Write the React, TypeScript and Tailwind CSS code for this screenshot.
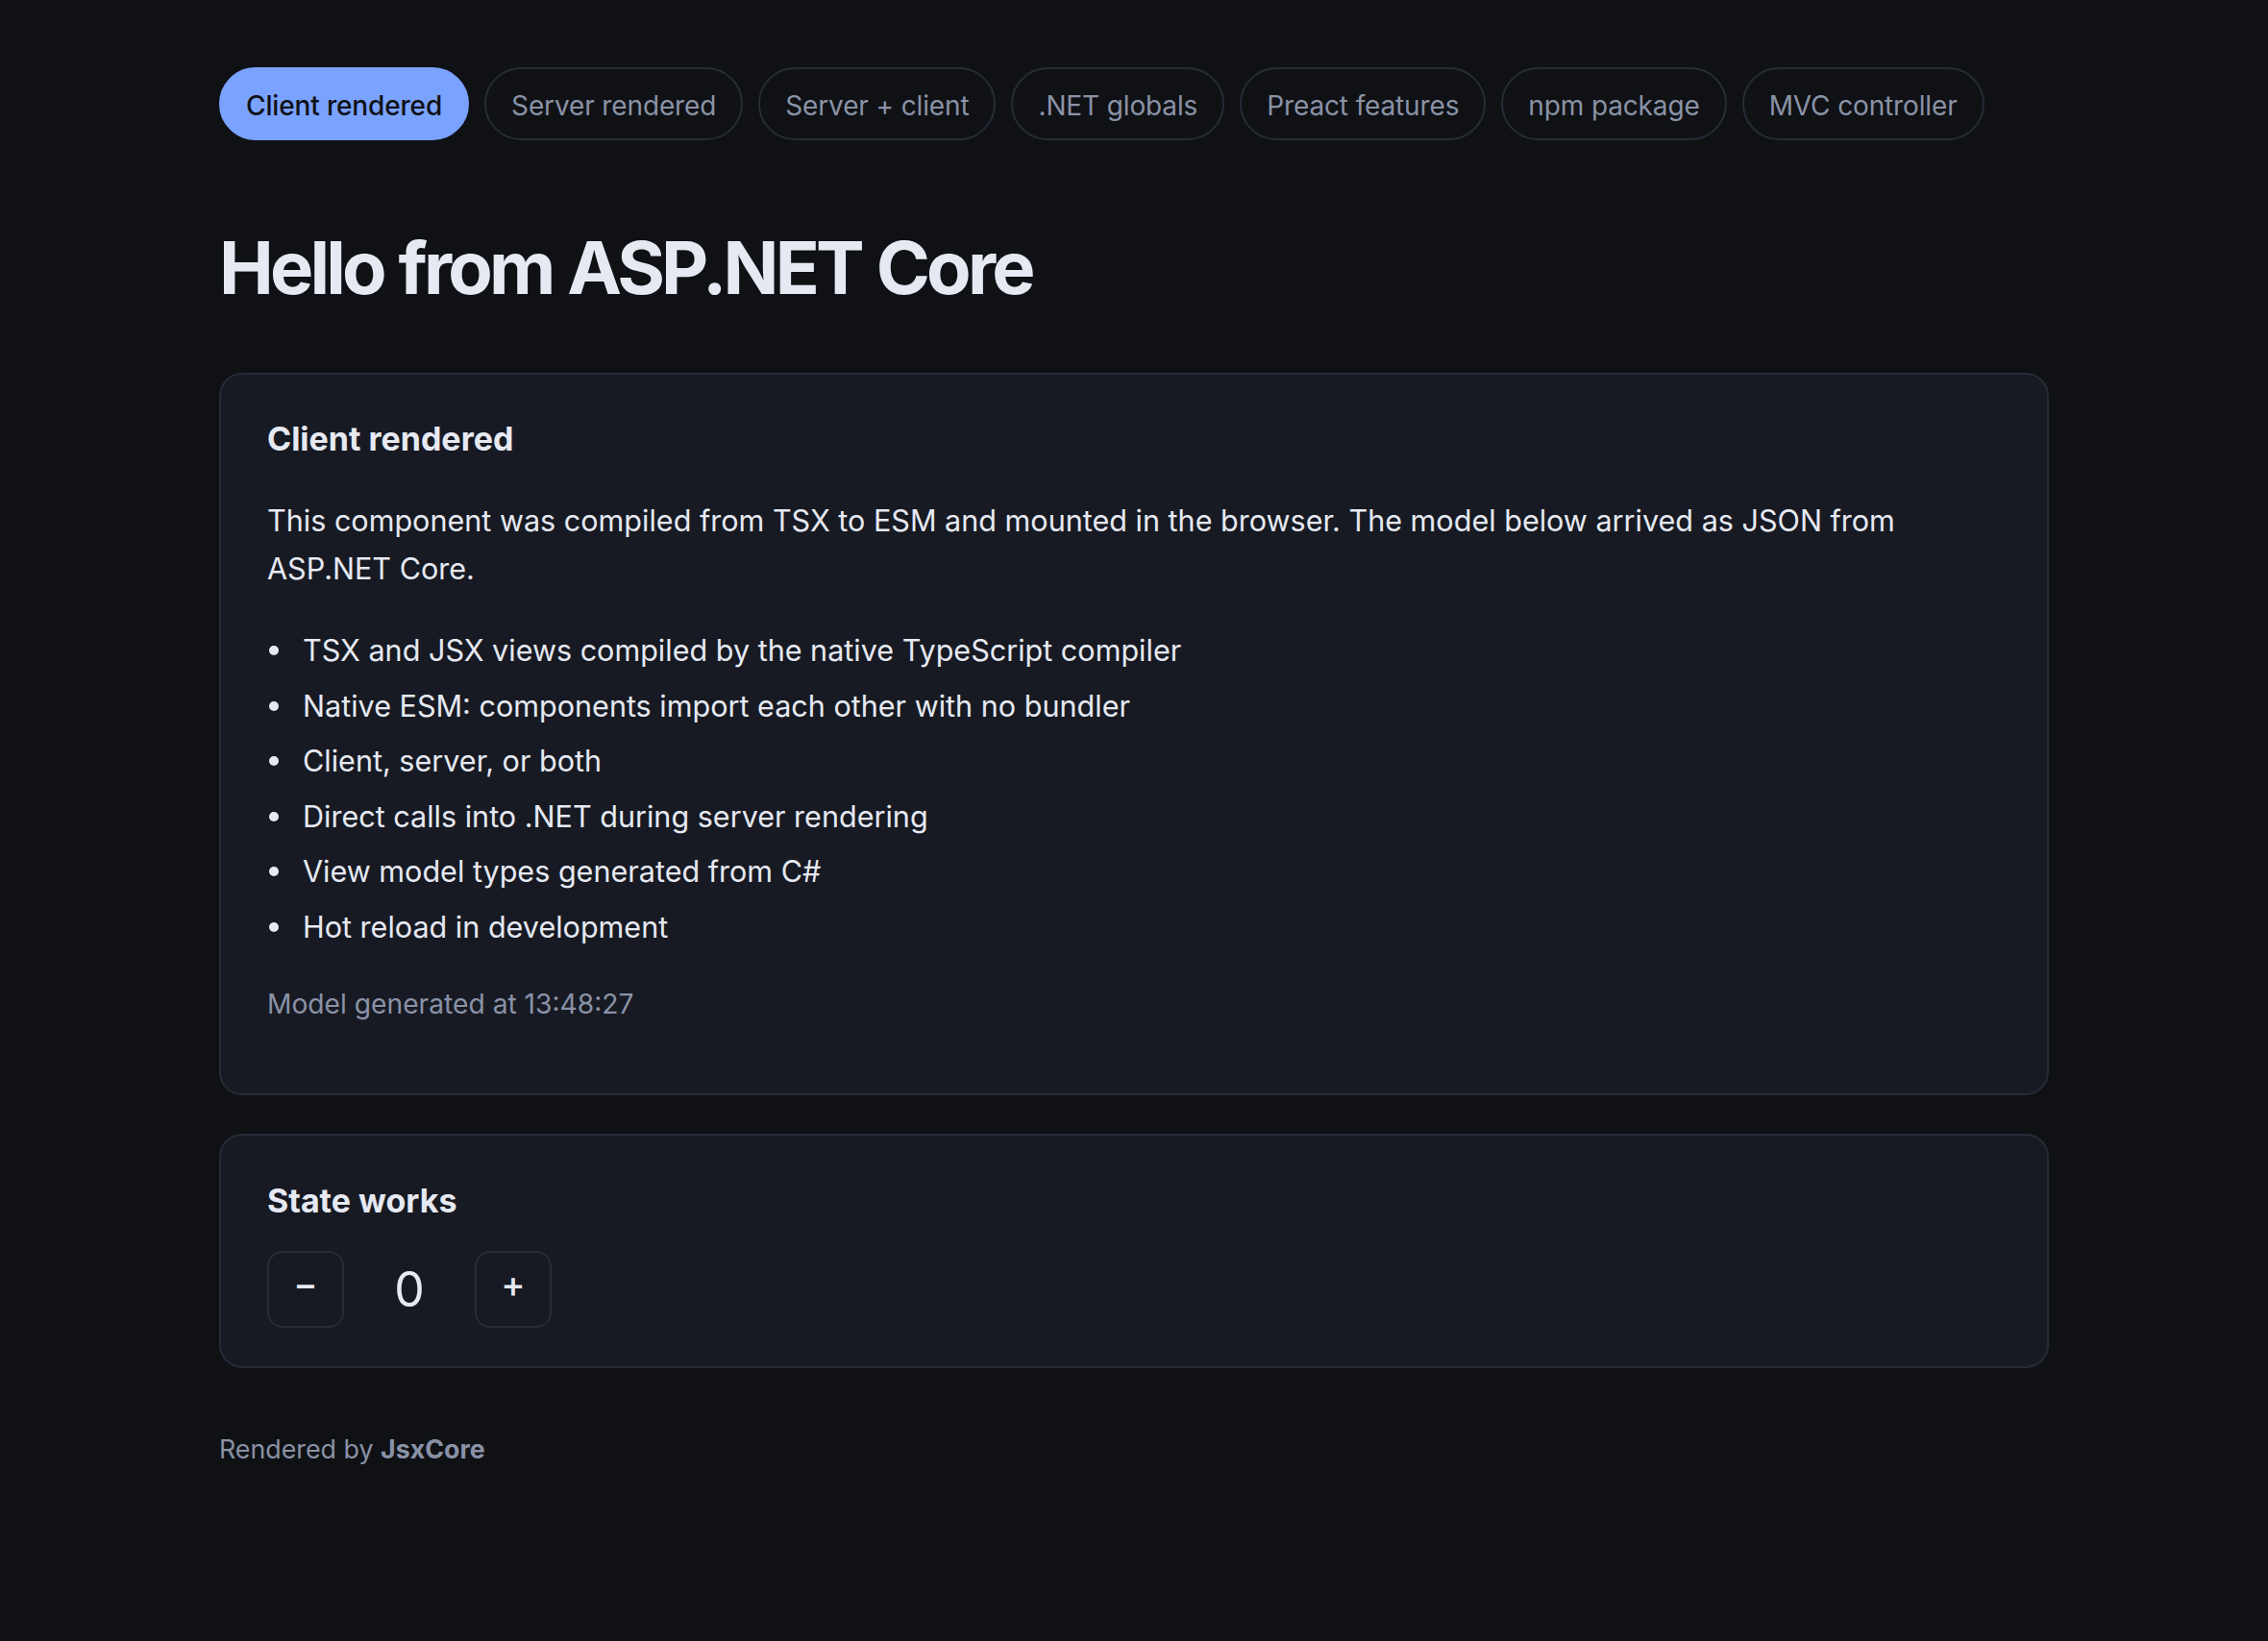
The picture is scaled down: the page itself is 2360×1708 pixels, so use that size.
const tabs = [
  "Client rendered",
  "Server rendered",
  "Server + client",
  ".NET globals",
  "Preact features",
  "npm package",
  "MVC controller",
];

const features = [
  "TSX and JSX views compiled by the native TypeScript compiler",
  "Native ESM: components import each other with no bundler",
  "Client, server, or both",
  "Direct calls into .NET during server rendering",
  "View model types generated from C#",
  "Hot reload in development",
];

function Card({ className, children }: { className: string; children: React.ReactNode }) {
  return (
    <section className={`rounded-[24px] border-2 border-[#262b36] bg-[#171a23] px-[48px] ${className}`}>
      {children}
    </section>
  );
}

function StepButton({ label }: { label: string }) {
  return (
    <button className="flex h-[80px] w-[80px] items-center justify-center rounded-[16px] border-2 border-[#262b36] bg-[#161921] pb-[12px] text-[38px] leading-none font-medium text-[#e6e9f2]">
      {label}
    </button>
  );
}

export default function App() {
  return (
    <div className="min-h-[1708px] bg-[#0f1115] font-['Inter',sans-serif] text-[#e6e9f2]">
      <div className="mx-auto w-[2000px] px-[48px] pt-[70px]">
        <nav className="flex gap-[16px]">
          {tabs.map((tab, i) => (
            <a
              key={tab}
              className={
                i === 0
                  ? "flex h-[76px] items-center rounded-full border-2 border-[#7aa2ff] bg-[#7aa2ff] px-[26px] pt-[3px] text-[28px] font-medium tracking-[-0.15px] text-[#0f1115]"
                  : "flex h-[76px] items-center rounded-full border-2 border-[#262b36] px-[26px] pt-[3px] text-[28px] tracking-[-0.133px] text-[#8a92a6]"
              }
            >
              {tab}
            </a>
          ))}
        </nav>

        <h1 className="mt-[87px] text-[76px] leading-[90px] font-bold tracking-[-3.8px] [word-spacing:1.5px]">
          Hello from ASP.NET Core
        </h1>

        <Card className="mt-[65px] h-[752px] pt-[43px]">
          <h2 className="text-[34px] leading-[48px] font-bold">Client rendered</h2>
          <p className="mt-[36px] text-[30.55px] leading-[50px]">
            This component was compiled from TSX to ESM and mounted in the browser. The model below arrived as JSON from ASP.NET Core.
          </p>
          <ul className="mt-[35px] text-[30.55px] leading-[50px]">
            {features.map((f) => (
              <li key={f} className="mb-[7.6px] flex items-center">
                <span className="ml-[2px] mr-[25px] h-[10px] w-[10px] rounded-full bg-[#e6e9f2]" />
                {f}
              </li>
            ))}
          </ul>
          <p className="mt-[33px] text-[28.2px] leading-[44px] text-[#8a92a6]">Model generated at 13:48:27</p>
        </Card>

        <Card className="mt-[40px] h-[244px] pt-[44px]">
          <h2 className="text-[34px] leading-[48px] font-bold">State works</h2>
          <div className="mt-[28px] flex items-center gap-[32px]">
            <StepButton label="−" />
            <span className="w-[72px] text-center text-[50px] leading-none">0</span>
            <StepButton label="+" />
          </div>
        </Card>

        <footer className="mt-[62px] text-[26.8px] leading-[44px] text-[#8a92a6]">
          Rendered by <strong className="font-bold">JsxCore</strong>
        </footer>
      </div>
    </div>
  );
}
